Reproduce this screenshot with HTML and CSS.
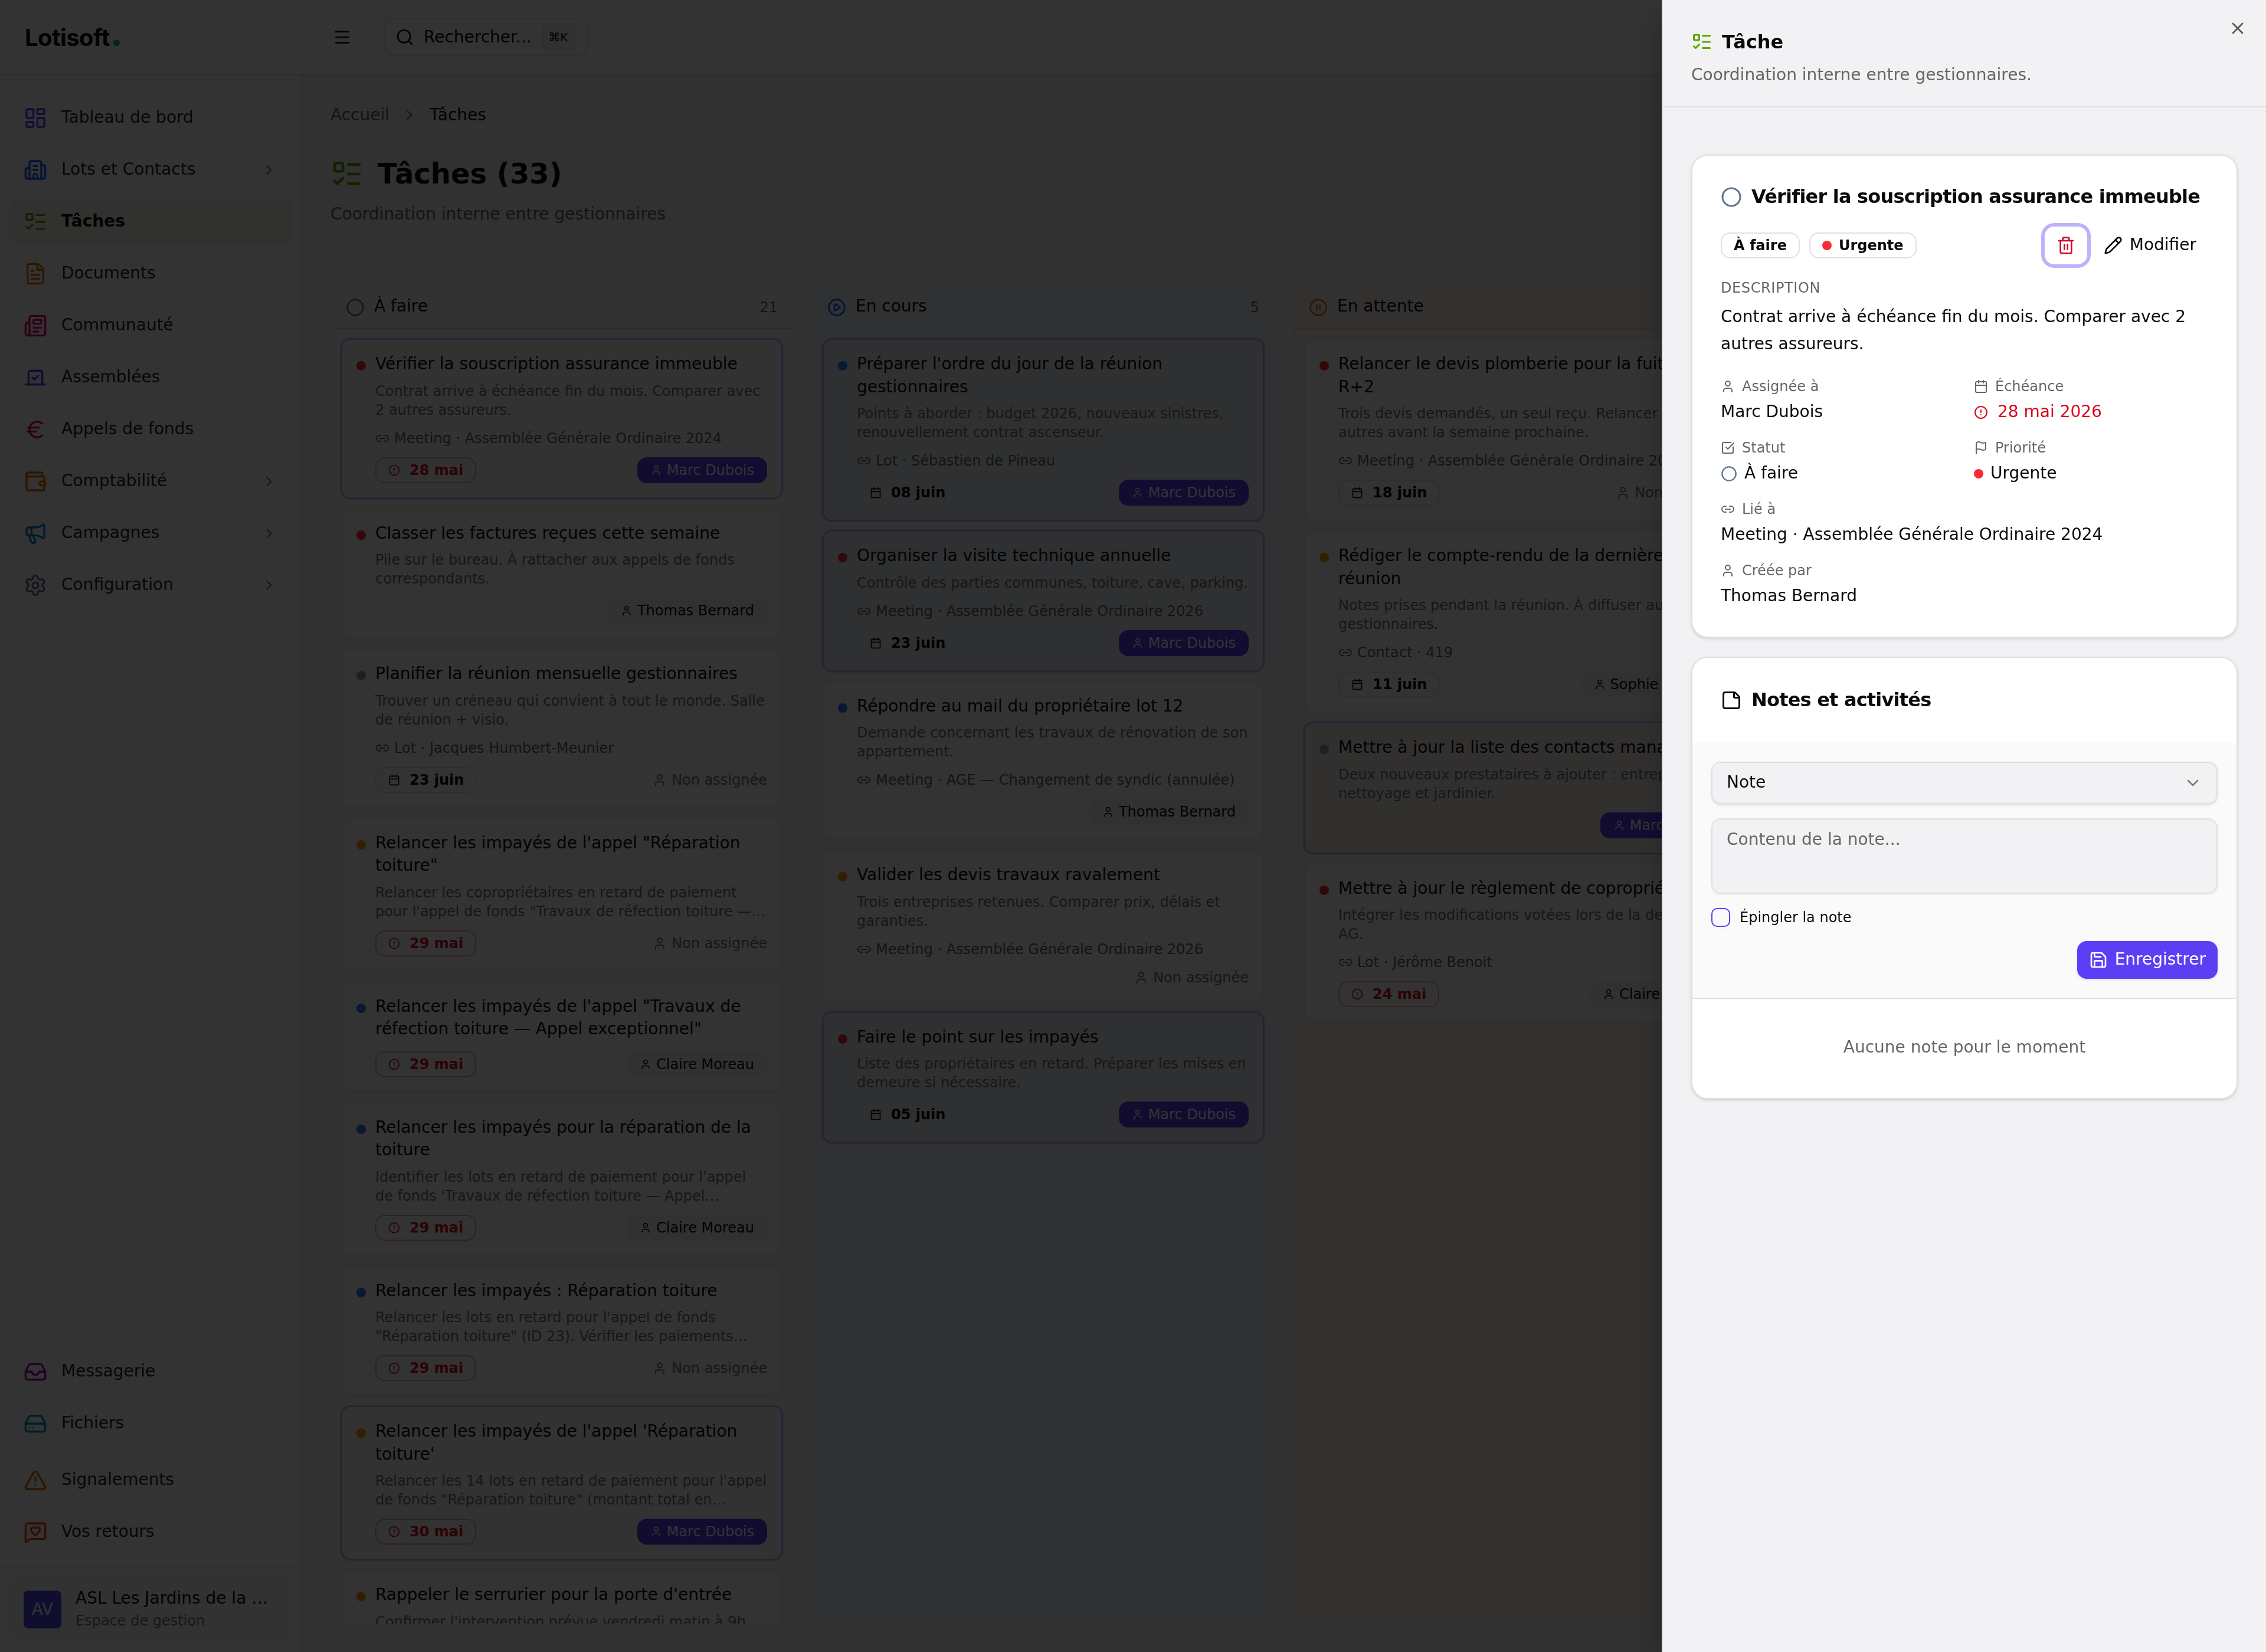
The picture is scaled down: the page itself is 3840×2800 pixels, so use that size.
FILE: index.html
```html
<!DOCTYPE html>
<html lang="fr">
<head>
    <meta charset="UTF-8">
    <meta name="viewport" content="width=device-width, initial-scale=1.0">
    <title>Tâches - Lotisoft</title>
    <link rel="stylesheet" href="styles.css">
</head>
<body>
    <!-- Icon set -->
    <svg class="sprite" xmlns="http://www.w3.org/2000/svg">
        <symbol id="dashboard" viewBox="0 0 24 24"><rect x="3" y="3" width="7" height="9" rx="1"/><rect x="14" y="3" width="7" height="5" rx="1"/><rect x="14" y="12" width="7" height="9" rx="1"/><rect x="3" y="16" width="7" height="5" rx="1"/></symbol>
        <symbol id="building" viewBox="0 0 24 24"><path d="M10 12h4M10 8h4M14 21v-3a2 2 0 0 0-4 0v3"/><path d="M6 10H4a2 2 0 0 0-2 2v7a2 2 0 0 0 2 2h16a2 2 0 0 0 2-2V9a2 2 0 0 0-2-2h-2"/><path d="M6 21V5a2 2 0 0 1 2-2h8a2 2 0 0 1 2 2v16"/></symbol>
        <symbol id="todo" viewBox="0 0 24 24"><path d="M13 5h8M13 12h8M13 19h8M3 17l2 2 4-4"/><rect x="3" y="4" width="6" height="6" rx="1"/></symbol>
        <symbol id="file-text" viewBox="0 0 24 24"><path d="M6 22a2 2 0 0 1-2-2V4a2 2 0 0 1 2-2h8a2.4 2.4 0 0 1 1.704.706l3.588 3.588A2.4 2.4 0 0 1 20 8v12a2 2 0 0 1-2 2z"/><path d="M14 2v5a1 1 0 0 0 1 1h5M10 9H8M16 13H8M16 17H8"/></symbol>
        <symbol id="newspaper" viewBox="0 0 24 24"><path d="M15 18h-5M18 14h-8"/><path d="M4 22h16a2 2 0 0 0 2-2V4a2 2 0 0 0-2-2H8a2 2 0 0 0-2 2v16a2 2 0 0 1-4 0v-9a2 2 0 0 1 2-2h2"/><rect x="10" y="6" width="8" height="4" rx="1"/></symbol>
        <symbol id="vote" viewBox="0 0 24 24"><path d="m9 12 2 2 4-4"/><path d="M5 7c0-1.1.9-2 2-2h10a2 2 0 0 1 2 2v12H5V7Z"/><path d="M22 19H2"/></symbol>
        <symbol id="euro" viewBox="0 0 24 24"><path d="M4 10h12M4 14h9"/><path d="M19 6a7.7 7.7 0 0 0-5.2-2A7.9 7.9 0 0 0 6 12c0 4.4 3.5 8 7.8 8 2 0 3.8-.8 5.2-2"/></symbol>
        <symbol id="wallet" viewBox="0 0 24 24"><path d="M19 7V4a1 1 0 0 0-1-1H5a2 2 0 0 0 0 4h15a1 1 0 0 1 1 1v4h-3a2 2 0 0 0 0 4h3a1 1 0 0 0 1-1v-2a1 1 0 0 0-1-1"/><path d="M3 5v14a2 2 0 0 0 2 2h15a1 1 0 0 0 1-1v-4"/></symbol>
        <symbol id="megaphone" viewBox="0 0 24 24"><path d="M11 6a13 13 0 0 0 8.4-2.8A1 1 0 0 1 21 4v12a1 1 0 0 1-1.6.8A13 13 0 0 0 11 14H5a2 2 0 0 1-2-2V8a2 2 0 0 1 2-2z"/><path d="M6 14a12 12 0 0 0 2.4 7.2 2 2 0 0 0 3.2-2.4A8 8 0 0 1 10 14M8 6v8"/></symbol>
        <symbol id="settings" viewBox="0 0 24 24"><path d="M9.671 4.136a2.34 2.34 0 0 1 4.659 0 2.34 2.34 0 0 0 3.319 1.915 2.34 2.34 0 0 1 2.33 4.033 2.34 2.34 0 0 0 0 3.831 2.34 2.34 0 0 1-2.33 4.033 2.34 2.34 0 0 0-3.319 1.915 2.34 2.34 0 0 1-4.659 0 2.34 2.34 0 0 0-3.32-1.915 2.34 2.34 0 0 1-2.33-4.033 2.34 2.34 0 0 0 0-3.831A2.34 2.34 0 0 1 6.35 6.051a2.34 2.34 0 0 0 3.319-1.915"/><circle cx="12" cy="12" r="3"/></symbol>
        <symbol id="inbox" viewBox="0 0 24 24"><path d="M22 12h-6l-2 3h-4l-2-3H2"/><path d="M5.45 5.11 2 12v6a2 2 0 0 0 2 2h16a2 2 0 0 0 2-2v-6l-3.45-6.89A2 2 0 0 0 16.76 4H7.24a2 2 0 0 0-1.79 1.11z"/></symbol>
        <symbol id="drive" viewBox="0 0 24 24"><path d="M22 12H2M6 16h.01M10 16h.01"/><path d="M5.45 5.11 2 12v6a2 2 0 0 0 2 2h16a2 2 0 0 0 2-2v-6l-3.45-6.89A2 2 0 0 0 16.76 4H7.24a2 2 0 0 0-1.79 1.11z"/></symbol>
        <symbol id="warning" viewBox="0 0 24 24"><path d="m21.73 18-8-14a2 2 0 0 0-3.48 0l-8 14A2 2 0 0 0 4 21h16a2 2 0 0 0 1.73-3M12 9v4M12 17h.01"/></symbol>
        <symbol id="message-heart" viewBox="0 0 24 24"><path d="M22 17a2 2 0 0 1-2 2H6.828a2 2 0 0 0-1.414.586l-2.202 2.202A.71.71 0 0 1 2 21.286V5a2 2 0 0 1 2-2h16a2 2 0 0 1 2 2z"/><path d="M7.5 9.5c0 .687.265 1.383.697 1.844l3.009 3.264a1.14 1.14 0 0 0 .407.314 1 1 0 0 0 .783-.004 1.14 1.14 0 0 0 .398-.31l3.008-3.264A2.77 2.77 0 0 0 16.5 9.5 2.5 2.5 0 0 0 12 8a2.5 2.5 0 0 0-4.5 1.5"/></symbol>
        <symbol id="chevron-right" viewBox="0 0 24 24"><path d="m9 18 6-6-6-6"/></symbol>
        <symbol id="chevron-down" viewBox="0 0 24 24"><path d="m6 9 6 6 6-6"/></symbol>
        <symbol id="menu" viewBox="0 0 24 24"><path d="M4 5h16M4 12h16M4 19h16"/></symbol>
        <symbol id="search" viewBox="0 0 24 24"><path d="m21 21-4.34-4.34"/><circle cx="11" cy="11" r="8"/></symbol>
        <symbol id="circle" viewBox="0 0 24 24"><circle cx="12" cy="12" r="10"/></symbol>
        <symbol id="circle-play" viewBox="0 0 24 24"><circle cx="12" cy="12" r="10"/><path d="M9 9.003a1 1 0 0 1 1.517-.859l4.997 2.997a1 1 0 0 1 0 1.718l-4.997 2.997A1 1 0 0 1 9 14.996z"/></symbol>
        <symbol id="circle-pause" viewBox="0 0 24 24"><circle cx="12" cy="12" r="10"/><path d="M10 15V9M14 15V9"/></symbol>
        <symbol id="alert" viewBox="0 0 24 24"><circle cx="12" cy="12" r="10"/><path d="M12 8v4M12 16h.01"/></symbol>
        <symbol id="link" viewBox="0 0 24 24"><path d="M9 17H7A5 5 0 0 1 7 7h2M15 7h2a5 5 0 1 1 0 10h-2M8 12h8"/></symbol>
        <symbol id="user" viewBox="0 0 24 24"><path d="M19 21v-2a4 4 0 0 0-4-4H9a4 4 0 0 0-4 4v2"/><circle cx="12" cy="7" r="4"/></symbol>
        <symbol id="calendar" viewBox="0 0 24 24"><path d="M8 2v4M16 2v4M3 10h18"/><rect x="3" y="4" width="18" height="18" rx="2"/></symbol>
        <symbol id="check-square" viewBox="0 0 24 24"><path d="M21 10.656V19a2 2 0 0 1-2 2H5a2 2 0 0 1-2-2V5a2 2 0 0 1 2-2h12.344"/><path d="m9 11 3 3L22 4"/></symbol>
        <symbol id="flag" viewBox="0 0 24 24"><path d="M4 22V4a1 1 0 0 1 .4-.8A6 6 0 0 1 8 2c3 0 5 2 7.333 2q2 0 3.067-.8A1 1 0 0 1 20 4v10a1 1 0 0 1-.4.8A6 6 0 0 1 16 16c-3 0-5-2-8-2a6 6 0 0 0-4 1.528"/></symbol>
        <symbol id="trash" viewBox="0 0 24 24"><path d="M10 11v6M14 11v6M19 6v14a2 2 0 0 1-2 2H7a2 2 0 0 1-2-2V6M3 6h18M8 6V4a2 2 0 0 1 2-2h4a2 2 0 0 1 2 2v2"/></symbol>
        <symbol id="pencil" viewBox="0 0 24 24"><path d="M21.174 6.812a1 1 0 0 0-3.986-3.987L3.842 16.174a2 2 0 0 0-.5.83l-1.321 4.352a.5.5 0 0 0 .623.622l4.353-1.32a2 2 0 0 0 .83-.497z"/><path d="m15 5 4 4"/></symbol>
        <symbol id="note" viewBox="0 0 24 24"><path d="M21 9a2.4 2.4 0 0 0-.706-1.706l-3.588-3.588A2.4 2.4 0 0 0 15 3H5a2 2 0 0 0-2 2v14a2 2 0 0 0 2 2h14a2 2 0 0 0 2-2z"/><path d="M15 3v5a1 1 0 0 0 1 1h5"/></symbol>
        <symbol id="save" viewBox="0 0 24 24"><path d="M15.2 3a2 2 0 0 1 1.4.6l3.8 3.8a2 2 0 0 1 .6 1.4V19a2 2 0 0 1-2 2H5a2 2 0 0 1-2-2V5a2 2 0 0 1 2-2z"/><path d="M17 21v-7a1 1 0 0 0-1-1H8a1 1 0 0 0-1 1v7M7 3v4a1 1 0 0 0 1 1h7"/></symbol>
        <symbol id="close" viewBox="0 0 24 24"><path d="M18 6 6 18M6 6l12 12"/></symbol>
    </svg>

    <div class="app">
        <header class="topbar">
            <div class="brand">Lotisoft<span class="brand-dot"></span></div>
            <div class="topbar-tools">
                <svg class="icon menu-icon"><use href="#menu"/></svg>
                <div class="search">
                    <svg class="icon"><use href="#search"/></svg>
                    <span>Rechercher...</span>
                    <kbd>⌘K</kbd>
                </div>
            </div>
        </header>

        <aside class="sidebar">
            <nav class="nav">
                <a class="nav-item"><svg class="icon c-violet"><use href="#dashboard"/></svg><span>Tableau de bord</span></a>
                <a class="nav-item"><svg class="icon c-blue"><use href="#building"/></svg><span>Lots et Contacts</span><svg class="icon chevron"><use href="#chevron-right"/></svg></a>
                <a class="nav-item active"><svg class="icon c-lime"><use href="#todo"/></svg><span>Tâches</span></a>
                <a class="nav-item"><svg class="icon c-amber"><use href="#file-text"/></svg><span>Documents</span></a>
                <a class="nav-item"><svg class="icon c-pink"><use href="#newspaper"/></svg><span>Communauté</span></a>
                <a class="nav-item"><svg class="icon c-indigo"><use href="#vote"/></svg><span>Assemblées</span></a>
                <a class="nav-item"><svg class="icon c-rose"><use href="#euro"/></svg><span>Appels de fonds</span></a>
                <a class="nav-item"><svg class="icon c-amber"><use href="#wallet"/></svg><span>Comptabilité</span><svg class="icon chevron"><use href="#chevron-right"/></svg></a>
                <a class="nav-item"><svg class="icon c-sky"><use href="#megaphone"/></svg><span>Campagnes</span><svg class="icon chevron"><use href="#chevron-right"/></svg></a>
                <a class="nav-item"><svg class="icon c-slate"><use href="#settings"/></svg><span>Configuration</span><svg class="icon chevron"><use href="#chevron-right"/></svg></a>
            </nav>
            <nav class="nav nav-bottom">
                <a class="nav-item"><svg class="icon c-fuchsia"><use href="#inbox"/></svg><span>Messagerie</span></a>
                <a class="nav-item"><svg class="icon c-cyan"><use href="#drive"/></svg><span>Fichiers</span></a>
                <a class="nav-item spaced"><svg class="icon c-amber"><use href="#warning"/></svg><span>Signalements</span></a>
                <a class="nav-item"><svg class="icon c-orange"><use href="#message-heart"/></svg><span>Vos retours</span></a>
            </nav>
            <div class="account">
                <div class="account-box">
                    <div class="avatar">AV</div>
                    <div class="account-text">
                        <div class="account-name">ASL Les Jardins de la …</div>
                        <div class="account-role">Espace de gestion</div>
                    </div>
                </div>
            </div>
        </aside>

        <main class="main">
            <div class="breadcrumb">
                <span class="muted">Accueil</span>
                <svg class="icon"><use href="#chevron-right"/></svg>
                <span>Tâches</span>
            </div>
            <h1 class="page-title"><svg class="icon c-lime"><use href="#todo"/></svg><span>Tâches (33)</span></h1>
            <p class="page-subtitle">Coordination interne entre gestionnaires</p>

            <div class="board">
                <section class="column">
                    <div class="column-head"><svg class="icon c-slate"><use href="#circle"/></svg><span>À faire</span><span class="count">21</span></div>
                    <div class="column-body">
                        <article class="card mine">
                            <span class="dot red"></span>
                            <div class="card-content">
                                <h3>Vérifier la souscription assurance immeuble</h3>
                                <p>Contrat arrive à échéance fin du mois. Comparer avec 2 autres assureurs.</p>
                                <div class="card-link"><svg class="icon"><use href="#link"/></svg>Meeting · Assemblée Générale Ordinaire 2024</div>
                                <div class="card-foot"><span class="date late"><svg class="icon"><use href="#alert"/></svg>28 mai</span><span class="pill me"><svg class="icon"><use href="#user"/></svg>Marc Dubois</span></div>
                            </div>
                        </article>
                        <article class="card">
                            <span class="dot red"></span>
                            <div class="card-content">
                                <h3>Classer les factures reçues cette semaine</h3>
                                <p>Pile sur le bureau. À rattacher aux appels de fonds correspondants.</p>
                                <div class="card-foot"><span class="pill"><svg class="icon"><use href="#user"/></svg>Thomas Bernard</span></div>
                            </div>
                        </article>
                        <article class="card">
                            <span class="dot slate"></span>
                            <div class="card-content">
                                <h3>Planifier la réunion mensuelle gestionnaires</h3>
                                <p>Trouver un créneau qui convient à tout le monde. Salle de réunion + visio.</p>
                                <div class="card-link"><svg class="icon"><use href="#link"/></svg>Lot · Jacques Humbert-Meunier</div>
                                <div class="card-foot"><span class="date"><svg class="icon"><use href="#calendar"/></svg>23 juin</span><span class="nobody"><svg class="icon"><use href="#user"/></svg>Non assignée</span></div>
                            </div>
                        </article>
                        <article class="card">
                            <span class="dot amber"></span>
                            <div class="card-content">
                                <h3>Relancer les impayés de l'appel "Réparation toiture"</h3>
                                <p>Relancer les copropriétaires en retard de paiement pour l'appel de fonds "Travaux de réfection toiture —…</p>
                                <div class="card-foot"><span class="date late"><svg class="icon"><use href="#alert"/></svg>29 mai</span><span class="nobody"><svg class="icon"><use href="#user"/></svg>Non assignée</span></div>
                            </div>
                        </article>
                        <article class="card">
                            <span class="dot blue"></span>
                            <div class="card-content">
                                <h3>Relancer les impayés de l'appel "Travaux de réfection toiture — Appel exceptionnel"</h3>
                                <div class="card-foot"><span class="date late"><svg class="icon"><use href="#alert"/></svg>29 mai</span><span class="pill"><svg class="icon"><use href="#user"/></svg>Claire Moreau</span></div>
                            </div>
                        </article>
                        <article class="card">
                            <span class="dot blue"></span>
                            <div class="card-content">
                                <h3>Relancer les impayés pour la réparation de la toiture</h3>
                                <p>Identifier les lots en retard de paiement pour l'appel de fonds 'Travaux de réfection toiture — Appel…</p>
                                <div class="card-foot"><span class="date late"><svg class="icon"><use href="#alert"/></svg>29 mai</span><span class="pill"><svg class="icon"><use href="#user"/></svg>Claire Moreau</span></div>
                            </div>
                        </article>
                        <article class="card">
                            <span class="dot blue"></span>
                            <div class="card-content">
                                <h3>Relancer les impayés : Réparation toiture</h3>
                                <p>Relancer les lots en retard pour l'appel de fonds "Réparation toiture" (ID 23). Vérifier les paiements…</p>
                                <div class="card-foot"><span class="date late"><svg class="icon"><use href="#alert"/></svg>29 mai</span><span class="nobody"><svg class="icon"><use href="#user"/></svg>Non assignée</span></div>
                            </div>
                        </article>
                        <article class="card mine">
                            <span class="dot amber"></span>
                            <div class="card-content">
                                <h3>Relancer les impayés de l'appel 'Réparation toiture'</h3>
                                <p>Relancer les 14 lots en retard de paiement pour l'appel de fonds "Réparation toiture" (montant total en…</p>
                                <div class="card-foot"><span class="date late"><svg class="icon"><use href="#alert"/></svg>30 mai</span><span class="pill me"><svg class="icon"><use href="#user"/></svg>Marc Dubois</span></div>
                            </div>
                        </article>
                        <article class="card">
                            <span class="dot amber"></span>
                            <div class="card-content">
                                <h3>Rappeler le serrurier pour la porte d'entrée</h3>
                                <p>Confirmer l'intervention prévue vendredi matin à 9h.</p>
                            </div>
                        </article>
                    </div>
                </section>

                <section class="column doing">
                    <div class="column-head"><svg class="icon c-blue"><use href="#circle-play"/></svg><span>En cours</span><span class="count">5</span></div>
                    <div class="column-body">
                        <article class="card mine">
                            <span class="dot blue"></span>
                            <div class="card-content">
                                <h3>Préparer l'ordre du jour de la réunion gestionnaires</h3>
                                <p>Points à aborder : budget 2026, nouveaux sinistres, renouvellement contrat ascenseur.</p>
                                <div class="card-link"><svg class="icon"><use href="#link"/></svg>Lot · Sébastien de Pineau</div>
                                <div class="card-foot"><span class="date"><svg class="icon"><use href="#calendar"/></svg>08 juin</span><span class="pill me"><svg class="icon"><use href="#user"/></svg>Marc Dubois</span></div>
                            </div>
                        </article>
                        <article class="card mine">
                            <span class="dot red"></span>
                            <div class="card-content">
                                <h3>Organiser la visite technique annuelle</h3>
                                <p>Contrôle des parties communes, toiture, cave, parking.</p>
                                <div class="card-link"><svg class="icon"><use href="#link"/></svg>Meeting · Assemblée Générale Ordinaire 2026</div>
                                <div class="card-foot"><span class="date"><svg class="icon"><use href="#calendar"/></svg>23 juin</span><span class="pill me"><svg class="icon"><use href="#user"/></svg>Marc Dubois</span></div>
                            </div>
                        </article>
                        <article class="card">
                            <span class="dot blue"></span>
                            <div class="card-content">
                                <h3>Répondre au mail du propriétaire lot 12</h3>
                                <p>Demande concernant les travaux de rénovation de son appartement.</p>
                                <div class="card-link"><svg class="icon"><use href="#link"/></svg>Meeting · AGE — Changement de syndic (annulée)</div>
                                <div class="card-foot"><span class="pill"><svg class="icon"><use href="#user"/></svg>Thomas Bernard</span></div>
                            </div>
                        </article>
                        <article class="card">
                            <span class="dot amber"></span>
                            <div class="card-content">
                                <h3>Valider les devis travaux ravalement</h3>
                                <p>Trois entreprises retenues. Comparer prix, délais et garanties.</p>
                                <div class="card-link"><svg class="icon"><use href="#link"/></svg>Meeting · Assemblée Générale Ordinaire 2026</div>
                                <div class="card-foot"><span class="nobody"><svg class="icon"><use href="#user"/></svg>Non assignée</span></div>
                            </div>
                        </article>
                        <article class="card mine">
                            <span class="dot red"></span>
                            <div class="card-content">
                                <h3>Faire le point sur les impayés</h3>
                                <p>Liste des propriétaires en retard. Préparer les mises en demeure si nécessaire.</p>
                                <div class="card-foot"><span class="date"><svg class="icon"><use href="#calendar"/></svg>05 juin</span><span class="pill me"><svg class="icon"><use href="#user"/></svg>Marc Dubois</span></div>
                            </div>
                        </article>
                    </div>
                </section>

                <section class="column waiting">
                    <div class="column-head"><svg class="icon c-amber"><use href="#circle-pause"/></svg><span>En attente</span></div>
                    <div class="column-body">
                        <article class="card">
                            <span class="dot red"></span>
                            <div class="card-content">
                                <h3>Relancer le devis plomberie pour la fuite cave R+2</h3>
                                <p>Trois devis demandés, un seul reçu. Relancer les deux autres avant la semaine prochaine.</p>
                                <div class="card-link"><svg class="icon"><use href="#link"/></svg>Meeting · Assemblée Générale Ordinaire 2026</div>
                                <div class="card-foot"><span class="date"><svg class="icon"><use href="#calendar"/></svg>18 juin</span><span class="nobody"><svg class="icon"><use href="#user"/></svg>Non assignée</span></div>
                            </div>
                        </article>
                        <article class="card">
                            <span class="dot amber"></span>
                            <div class="card-content">
                                <h3>Rédiger le compte-rendu de la dernière réunion</h3>
                                <p>Notes prises pendant la réunion. À diffuser aux gestionnaires.</p>
                                <div class="card-link"><svg class="icon"><use href="#link"/></svg>Contact · 419</div>
                                <div class="card-foot"><span class="date"><svg class="icon"><use href="#calendar"/></svg>11 juin</span><span class="pill"><svg class="icon"><use href="#user"/></svg>Sophie Laurent</span></div>
                            </div>
                        </article>
                        <article class="card mine">
                            <span class="dot slate"></span>
                            <div class="card-content">
                                <h3>Mettre à jour la liste des contacts managers</h3>
                                <p>Deux nouveaux prestataires à ajouter : entreprise de nettoyage et jardinier.</p>
                                <div class="card-foot"><span class="pill me"><svg class="icon"><use href="#user"/></svg>Marc Dubois</span></div>
                            </div>
                        </article>
                        <article class="card">
                            <span class="dot red"></span>
                            <div class="card-content">
                                <h3>Mettre à jour le règlement de copropriété</h3>
                                <p>Intégrer les modifications votées lors de la dernière AG.</p>
                                <div class="card-link"><svg class="icon"><use href="#link"/></svg>Lot · Jérôme Benoit</div>
                                <div class="card-foot"><span class="date late"><svg class="icon"><use href="#alert"/></svg>24 mai</span><span class="pill"><svg class="icon"><use href="#user"/></svg>Claire Moreau</span></div>
                            </div>
                        </article>
                    </div>
                </section>
            </div>
        </main>
    </div>

    <div class="overlay"></div>

    <!-- Task details -->
    <aside class="drawer">
        <svg class="icon drawer-close"><use href="#close"/></svg>
        <header class="drawer-head">
            <h2><svg class="icon c-lime"><use href="#todo"/></svg>Tâche</h2>
            <p>Coordination interne entre gestionnaires.</p>
        </header>
        <div class="drawer-body">
            <section class="panel task">
                <h3 class="panel-title"><svg class="icon c-slate"><use href="#circle"/></svg><span>Vérifier la souscription assurance immeuble</span></h3>
                <div class="task-bar">
                    <span class="badge">À faire</span>
                    <span class="badge"><span class="dot red"></span>Urgente</span>
                    <div class="task-actions">
                        <button class="btn-delete"><svg class="icon"><use href="#trash"/></svg></button>
                        <button class="btn-edit"><svg class="icon"><use href="#pencil"/></svg><span>Modifier</span></button>
                    </div>
                </div>
                <div class="task-label">Description</div>
                <p class="task-text">Contrat arrive à échéance fin du mois. Comparer avec 2 autres assureurs.</p>
                <dl class="facts">
                    <div>
                        <dt><svg class="icon"><use href="#user"/></svg>Assignée à</dt>
                        <dd><span>Marc Dubois</span></dd>
                    </div>
                    <div>
                        <dt><svg class="icon"><use href="#calendar"/></svg>Échéance</dt>
                        <dd class="overdue"><svg class="icon"><use href="#alert"/></svg><span>28 mai 2026</span></dd>
                    </div>
                    <div>
                        <dt><svg class="icon"><use href="#check-square"/></svg>Statut</dt>
                        <dd class="status"><svg class="icon c-slate"><use href="#circle"/></svg><span>À faire</span></dd>
                    </div>
                    <div>
                        <dt><svg class="icon"><use href="#flag"/></svg>Priorité</dt>
                        <dd class="status"><i class="dot red"></i><span>Urgente</span></dd>
                    </div>
                    <div class="wide">
                        <dt><svg class="icon"><use href="#link"/></svg>Lié à</dt>
                        <dd><span>Meeting · Assemblée Générale Ordinaire 2024</span></dd>
                    </div>
                    <div class="wide">
                        <dt><svg class="icon"><use href="#user"/></svg>Créée par</dt>
                        <dd><span>Thomas Bernard</span></dd>
                    </div>
                </dl>
            </section>

            <section class="panel notes">
                <h3 class="panel-title"><svg class="icon"><use href="#note"/></svg><span>Notes et activités</span></h3>
                <form class="note-form">
                    <div class="select"><span>Note</span><svg class="icon"><use href="#chevron-down"/></svg></div>
                    <textarea placeholder="Contenu de la note..."></textarea>
                    <label class="pin"><span class="checkbox"></span>Épingler la note</label>
                    <button type="button" class="btn-save"><svg class="icon"><use href="#save"/></svg><span>Enregistrer</span></button>
                </form>
                <p class="empty">Aucune note pour le moment</p>
            </section>
        </div>
    </aside>
</body>
</html>
```
FILE: styles.css
```css
* {
    box-sizing: border-box;
}

body {
    margin: 0;
    height: 2800px;
    overflow: hidden;
    background: #f2f2f4;
    color: #0a0a0a;
    font-family: "DejaVu Sans", sans-serif;
    font-size: 28px;
    line-height: 40px;
}

h1, h2, h3, p, dl, dd {
    margin: 0;
}

button {
    font: inherit;
    border: none;
    background: none;
    color: inherit;
}

.sprite {
    display: none;
}

.icon {
    flex-shrink: 0;
    width: 32px;
    height: 32px;
    fill: none;
    stroke: currentColor;
    stroke-width: 2;
    stroke-linecap: round;
    stroke-linejoin: round;
}

.muted {
    color: #666;
}

.c-violet { color: #5b3ff5; }
.c-blue { color: #155dfc; }
.c-lime { color: #5ea500; }
.c-amber { color: #e17100; }
.c-pink { color: #e60076; }
.c-indigo { color: #4f39f6; }
.c-rose { color: #ec003f; }
.c-sky { color: #0084d1; }
.c-slate { color: #62748e; }
.c-fuchsia { color: #a800b7; }
.c-cyan { color: #0092b8; }
.c-orange { color: #f54900; }

.dot {
    flex-shrink: 0;
    width: 16px;
    height: 16px;
    border-radius: 50%;
}

.dot.red { background: #fb2c36; }
.dot.amber { background: #fe9a00; }
.dot.blue { background: #2b7fff; }
.dot.slate { background: #90a1b9; }

/* Layout */
.app {
    display: grid;
    grid-template-columns: 512px 1fr;
    grid-template-rows: 128px 2672px;
}

.topbar {
    grid-column: 1 / 3;
    display: flex;
    align-items: center;
    background: #fff;
    border-bottom: 2px solid #e4e4e7;
}

.brand {
    display: flex;
    align-items: baseline;
    width: 512px;
    height: 64px;
    padding-left: 42px;
    border-right: 2px solid #f0f0f2;
    font-family: Inter, sans-serif;
    font-size: 40px;
    font-weight: 700;
    line-height: 66px;
    letter-spacing: -0.6px;
}

.brand-dot {
    width: 11px;
    height: 11px;
    margin-left: 6px;
    border-radius: 50%;
    background: #00b98a;
}

.topbar-tools {
    display: flex;
    align-items: center;
    padding-left: 52px;
}

.search {
    display: flex;
    align-items: center;
    height: 64px;
    margin-left: 54px;
    padding: 0 20px 0 18px;
    border: 2px solid #e4e4e7;
    border-radius: 16px;
    box-shadow: 0 2px 4px rgba(0, 0, 0, 0.05);
}

.search span {
    margin: 0 17px 0 16px;
}

kbd {
    min-width: 56px;
    height: 44px;
    border: 2px solid #e4e4e7;
    border-radius: 8px;
    background: #f2f2f4;
    font-family: "DejaVu Sans", sans-serif;
    font-size: 20px;
    line-height: 40px;
    text-align: center;
}

/* Sidebar */
.sidebar {
    display: flex;
    flex-direction: column;
    background: #fff;
    border-right: 2px solid #e4e4e7;
}

.nav {
    display: flex;
    flex-direction: column;
    gap: 8px;
    padding: 32px 14px 0 16px;
}

.nav-bottom {
    margin-top: auto;
    padding-bottom: 17px;
}

.nav-item {
    display: flex;
    align-items: center;
    gap: 24px;
    height: 80px;
    padding: 0 26px 0 24px;
    border-radius: 12px;
    color: #262626;
}

.nav-item span {
    flex: 1;
    margin-top: -2px;
}

.nav-item .icon {
    width: 40px;
    height: 40px;
}

.nav-item .chevron {
    width: 28px;
    height: 28px;
    color: #777;
}

.nav-item.active {
    background: #f5f9ea;
    color: #0a0a0a;
    font-weight: 700;
}

.nav-item.spaced {
    margin-top: 8px;
}

.account {
    padding: 16px;
    border-top: 2px solid #e4e4e7;
}

.account-box {
    display: flex;
    align-items: center;
    gap: 24px;
    height: 112px;
    padding: 0 24px;
    border-radius: 12px;
    background: #fafafa;
}

.avatar {
    width: 64px;
    height: 64px;
    border-radius: 8px;
    background: #4f46e5;
    color: #fff;
    font-size: 28px;
    line-height: 64px;
    text-align: center;
}

.account-name {
    line-height: 38px;
}

.account-role {
    color: #737373;
    font-size: 24px;
    line-height: 38px;
}

/* Page */
.main {
    display: flex;
    flex-direction: column;
    padding: 45px 0 48px 48px;
    overflow: hidden;
}

.breadcrumb {
    display: flex;
    align-items: center;
    gap: 20px;
    height: 44px;
}

.breadcrumb .icon {
    width: 28px;
    height: 28px;
    color: #737373;
}

.page-title {
    display: flex;
    align-items: center;
    gap: 24px;
    height: 60px;
    margin-top: 48px;
    font-size: 48px;
    line-height: 60px;
}

.page-title span {
    margin-top: -2px;
}

.page-title .icon {
    width: 56px;
    height: 56px;
}

.page-subtitle {
    margin-top: 18px;
    color: #666;
}

.board {
    display: flex;
    gap: 32px;
    flex: 1;
    min-height: 0;
    margin-top: 101px;
}

.column {
    display: flex;
    flex-direction: column;
    flex-shrink: 0;
    width: 784px;
    border: 2px solid #e9e9eb;
    border-bottom: none;
    border-radius: 20px 20px 0 0;
    background: #fafafa;
    overflow: hidden;
}

.column.doing {
    border-color: #eaedf8;
    background: #f1f3fc;
}

.column.waiting {
    border-color: #eae4d8;
    background: #f7f4ed;
}

.column-head {
    display: flex;
    align-items: center;
    gap: 16px;
    flex-shrink: 0;
    height: 72px;
    padding: 0 24px;
    border-bottom: 2px solid #e0e0e3;
}

.doing .column-head {
    border-color: #e2e6f2;
}

.waiting .column-head {
    border-color: #e4dccb;
}

.column-head span {
    margin-top: -4px;
}

.column-head .count {
    margin: 0 0 0 auto;
    color: #666;
    font-size: 24px;
}

.column-body {
    display: flex;
    flex-direction: column;
    gap: 16px;
    flex: 1;
    min-height: 0;
    padding: 16px;
    overflow: hidden;
}

/* Task card */
.card {
    display: flex;
    gap: 16px;
    flex-shrink: 0;
    padding: 24px;
    border: 2px solid #eaeaec;
    border-radius: 16px;
    background: #fcfcfc;
}

.card.mine {
    border-color: #bdb1fa;
    box-shadow: 0 0 0 2px #cfc7fb;
    background: #f8f7fc;
}

.doing .card.mine {
    background: #e9f0f5;
}

.waiting .card.mine {
    background: #f8efeb;
}

.card > .dot {
    margin-top: 12px;
}

.card-content {
    flex: 1;
}

.card h3 {
    margin-top: -2px;
    font-size: 28px;
    font-weight: 400;
    line-height: 38.5px;
}

.card p {
    margin-top: 10px;
    color: #737373;
    font-size: 24px;
    line-height: 32px;
}

.card-link {
    display: flex;
    align-items: center;
    gap: 8px;
    margin-top: 16px;
    color: #666;
    font-size: 24px;
    line-height: 32px;
}

.card-link .icon {
    width: 24px;
    height: 24px;
}

.card-foot {
    display: flex;
    align-items: center;
    justify-content: space-between;
    margin-top: 16px;
    font-size: 24px;
    line-height: 32px;
}

.card h3 + .card-foot {
    margin-top: 18px;
}

.card-foot .icon {
    width: 20px;
    height: 20px;
}

.date, .pill {
    display: flex;
    align-items: center;
    height: 44px;
    padding: 0 20px;
    border: 2px solid #e4e4e7;
    border-radius: 16px;
}

.date {
    gap: 16px;
    font-weight: 700;
}

.doing .date {
    border-color: transparent;
}

.date.late {
    border-color: #f5a3a8;
    color: #d50a1c;
}

.pill {
    gap: 8px;
    margin-left: auto;
    border-color: #f5f5f6;
    background: #f5f5f6;
}

.pill.me {
    border-color: #5b3ff5;
    background: #5b3ff5;
    color: #fff;
}

.nobody {
    display: flex;
    align-items: center;
    gap: 8px;
    margin-left: auto;
    color: #737373;
}

.nobody .icon {
    width: 24px;
    height: 24px;
}

.overlay {
    position: fixed;
    inset: 0;
    background: rgba(0, 0, 0, 0.8);
}

/* Drawer */
.drawer {
    position: fixed;
    top: 0;
    right: 0;
    bottom: 0;
    width: 1024px;
    border-left: 2px solid #e0e0e3;
    background: #f2f2f4;
    box-shadow: 0 20px 50px rgba(0, 0, 0, 0.25);
}

.drawer-close {
    position: absolute;
    top: 32px;
    right: 32px;
    color: #555;
}

.drawer-head {
    height: 182px;
    padding: 47px 48px 0;
    border-bottom: 2px solid #e0e0e3;
}

.drawer-head h2 {
    display: flex;
    align-items: center;
    gap: 16px;
    font-size: 32px;
    line-height: 48px;
}

.drawer-head h2 .icon {
    width: 36px;
    height: 36px;
}

.drawer-head p {
    margin-top: 12px;
    color: #666;
}

.drawer-body {
    display: flex;
    flex-direction: column;
    gap: 32px;
    padding: 80px 48px 0;
}

.panel {
    border: 2px solid #e0e0e3;
    border-radius: 28px;
    background: #fff;
    box-shadow: 0 2px 6px rgba(0, 0, 0, 0.1), 0 2px 4px -2px rgba(0, 0, 0, 0.1);
    overflow: hidden;
}

.panel-title {
    display: flex;
    align-items: center;
    gap: 16px;
    height: 44px;
    font-size: 32px;
    line-height: 44px;
    letter-spacing: -0.8px;
    white-space: nowrap;
}

.panel-title span {
    margin-top: -2px;
}

.panel-title .icon {
    width: 36px;
    height: 36px;
}

.panel.task {
    padding: 48px;
}

.task-bar {
    display: flex;
    align-items: center;
    gap: 16px;
    height: 64px;
    margin-top: 28px;
}

.badge {
    display: flex;
    align-items: center;
    gap: 12px;
    height: 44px;
    padding: 0 20px;
    border: 2px solid #e0e0e3;
    border-radius: 16px;
    font-size: 24px;
    font-weight: 700;
    line-height: 32px;
}

.task-actions {
    display: flex;
    gap: 8px;
    margin-left: auto;
}

.btn-delete {
    display: flex;
    align-items: center;
    justify-content: center;
    width: 72px;
    height: 64px;
    padding: 0;
    border-radius: 16px;
    background: #fff;
    box-shadow: 0 0 0 6px #bdb2fb;
    color: #cf0a2c;
}

.btn-edit {
    display: flex;
    align-items: center;
    gap: 12px;
    height: 64px;
    padding: 0 20px;
}

.btn-edit span, .btn-save span, .select span, .facts dd span {
    margin-top: -3px;
}

.task-label {
    margin-top: 24px;
    color: #666;
    font-size: 24px;
    line-height: 32px;
    letter-spacing: 0.6px;
    text-transform: uppercase;
}

.task-text {
    margin-top: 10px;
    line-height: 45.5px;
}

.facts {
    display: grid;
    grid-template-columns: 1fr 1fr;
    gap: 24px 32px;
    margin-top: 34px;
}

.facts .wide {
    grid-column: 1 / 3;
}

.facts dt {
    display: flex;
    align-items: center;
    gap: 12px;
    color: #666;
    font-size: 24px;
    line-height: 32px;
}

.facts dd {
    display: flex;
    align-items: center;
    height: 40px;
    margin-top: 8px;
    line-height: 40px;
}

.facts .icon {
    width: 24px;
    height: 24px;
}

.facts .status {
    gap: 12px;
}

.facts .status .icon {
    width: 28px;
    height: 28px;
}

.facts .overdue {
    gap: 16px;
    color: #d9061a;
}

.notes .panel-title {
    height: 144px;
    padding: 0 48px;
}

.note-form {
    display: flex;
    flex-direction: column;
    padding: 32px;
    border-bottom: 2px solid #e0e0e3;
    background: #fafafa;
}

.select {
    display: flex;
    align-items: center;
    justify-content: space-between;
    height: 72px;
    padding: 0 24px;
    border: 2px solid #e0e0e3;
    border-radius: 16px;
    background: #f2f2f4;
    box-shadow: 0 2px 4px rgba(0, 0, 0, 0.1);
}

.select .icon {
    opacity: 0.5;
}

textarea {
    height: 128px;
    margin-top: 24px;
    padding: 14px 24px;
    border: 2px solid #e0e0e3;
    border-radius: 16px;
    background: #f2f2f4;
    box-shadow: 0 2px 4px rgba(0, 0, 0, 0.05);
    font: inherit;
    resize: none;
}

textarea::placeholder {
    color: #666;
}

.pin {
    display: flex;
    align-items: center;
    gap: 16px;
    margin-top: 24px;
    font-size: 24px;
    line-height: 32px;
}

.checkbox {
    width: 32px;
    height: 32px;
    border: 2px solid #5b3ff5;
    border-radius: 10px;
    box-shadow: 0 2px 4px rgba(0, 0, 0, 0.05);
}

.btn-save {
    display: flex;
    align-items: center;
    align-self: flex-end;
    gap: 12px;
    height: 64px;
    margin-top: 24px;
    padding: 0 20px;
    border-radius: 16px;
    background: #5b3ff5;
    box-shadow: 0 2px 4px rgba(0, 0, 0, 0.1);
    color: #fff;
}

.empty {
    padding: 62px 0 66px;
    color: #666;
    text-align: center;
}
```
